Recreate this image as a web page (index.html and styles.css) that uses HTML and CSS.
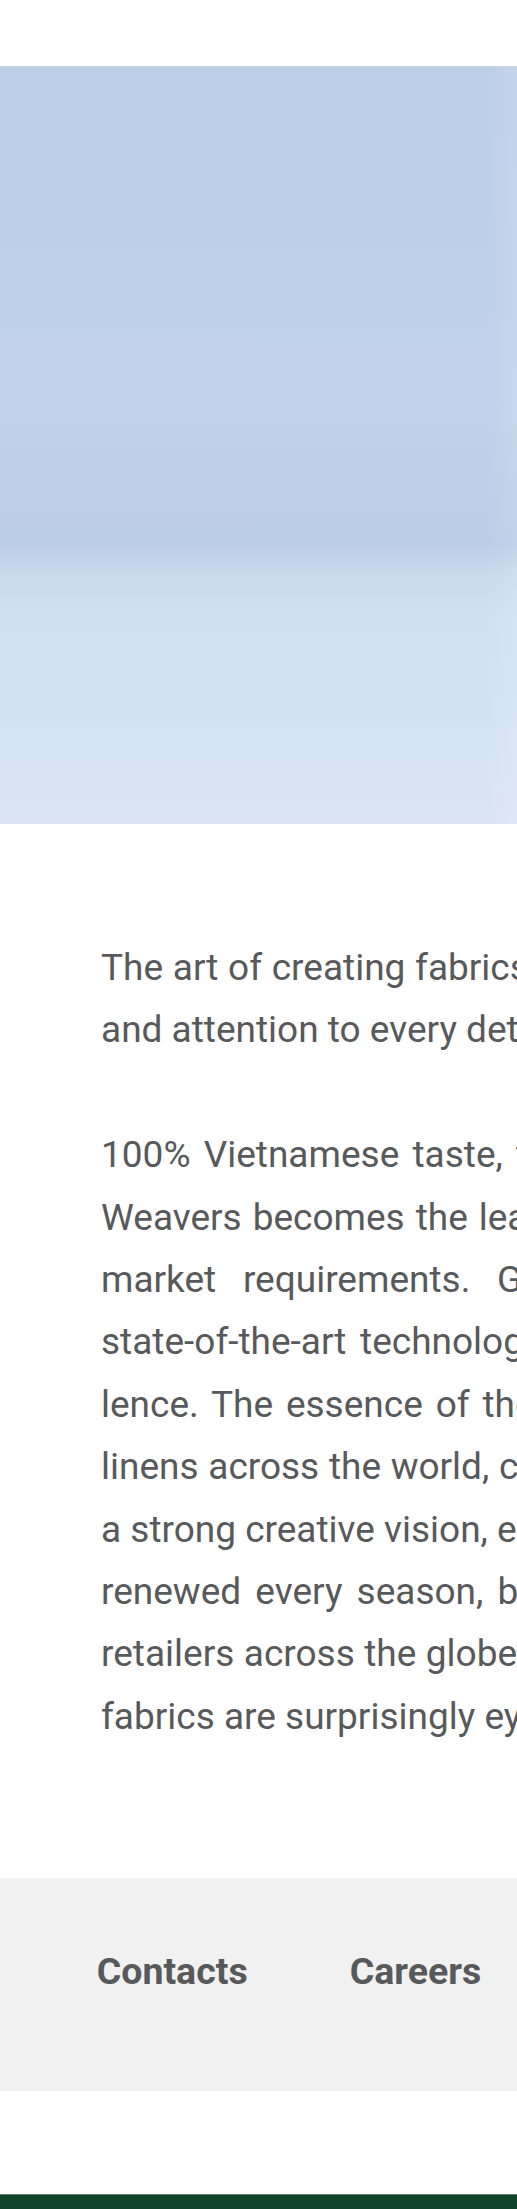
FILE: index.html
```html
<!DOCTYPE html>
<html lang="en">
<head>
<meta charset="utf-8">
<title>About</title>
<link rel="stylesheet" href="styles.css">
</head>
<body>
<header class="topbar"></header>
<section class="hero"></section>
<main class="about">
  <p class="para">
    <span class="line ws-a1">The art of creating fabrics is a journey of passion, skill</span>
    <span class="line ws-0">and attention to every detail.</span>
  </p>
  <p class="para">
    <span class="line ws-b1">100% Vietnamese taste, the spirit of Vietnam</span>
    <span class="line ws-b2">Weavers becomes the leading partner that meets</span>
    <span class="line ws-b3">market requirements. Growing with</span>
    <span class="line ws-b4">state-of-the-art technology, we commit to excel-</span>
    <span class="line ws-b5">lence. The essence of the finest cottons and</span>
    <span class="line ws-b6">linens across the world, combined with</span>
    <span class="line ws-0">a strong creative vision, each collection is</span>
    <span class="line ws-b8">renewed every season, bringing joy to</span>
    <span class="line ws-b9">retailers across the globe. Our</span>
    <span class="line ws-0">fabrics are surprisingly eye-catching.</span>
  </p>
</main>
<footer class="footer-links">
  <a class="flink" href="#">Contacts</a>
  <a class="flink" href="#">Careers</a>
</footer>
<div class="spacer"></div>
<div class="bottom-bar"></div>
</body>
</html>
```

FILE: styles.css
```css
html, body {
  margin: 0;
  padding: 0;
  overflow-x: hidden;
  background: #ffffff;
}
body {
  font-family: Roboto, "Liberation Sans", sans-serif;
  color: #58595b;
}
.topbar {
  height: 66px;
  background: #ffffff;
}
.hero {
  height: 758px;
  background:
    linear-gradient(to right, rgba(255,255,255,0) 0%, rgba(255,255,255,0) 94%, rgba(255,255,255,0.12) 100%),
    linear-gradient(to bottom,
      #c6d4e6 0px,
      #bbcfe8 2px,
      #bdd1e9 30%,
      #bfd2ea 45%,
      #bccfe7 56%,
      #bacde6 63%,
      #c9daed 67%,
      #d1e0f1 73%,
      #d3e2f2 85%,
      #d8e4f2 94%,
      #dbe5f2 100%);
}
.about {
  padding: 113px 0 0 101px;
  font-size: 37px;
  line-height: 62.4px;
}
.para {
  margin: 0 0 62.4px 0;
}
.para:last-child {
  margin-bottom: 0;
}
.line {
  display: block;
  white-space: nowrap;
}
.ws-0 { word-spacing: 0; }
.ws-a1 { word-spacing: 0.5px; }
.ws-b1 { word-spacing: 4px; }
.ws-b2 { word-spacing: 1.8px; }
.ws-b3 { word-spacing: 17.5px; }
.ws-b4 { word-spacing: 4.4px; }
.ws-b5 { word-spacing: 3.7px; }
.ws-b6 { word-spacing: 0.5px; }
.ws-b8 { word-spacing: 5px; }
.ws-b9 { word-spacing: 0.3px; }
.footer-links {
  margin-top: 130px;
  height: 213px;
  box-sizing: border-box;
  padding: 72px 0 0 96.7px;
  background: #f1f1f1;
  display: flex;
  gap: 102px;
  align-items: flex-start;
}
.flink {
  font-size: 37.5px;
  line-height: 43px;
  font-weight: 700;
  color: #58595b;
  text-decoration: none;
}
.spacer {
  height: 103px;
}
.bottom-bar {
  height: 15px;
  background: #10452c;
  border-top: 1px solid #5e7d69;
  box-sizing: border-box;
}
```
